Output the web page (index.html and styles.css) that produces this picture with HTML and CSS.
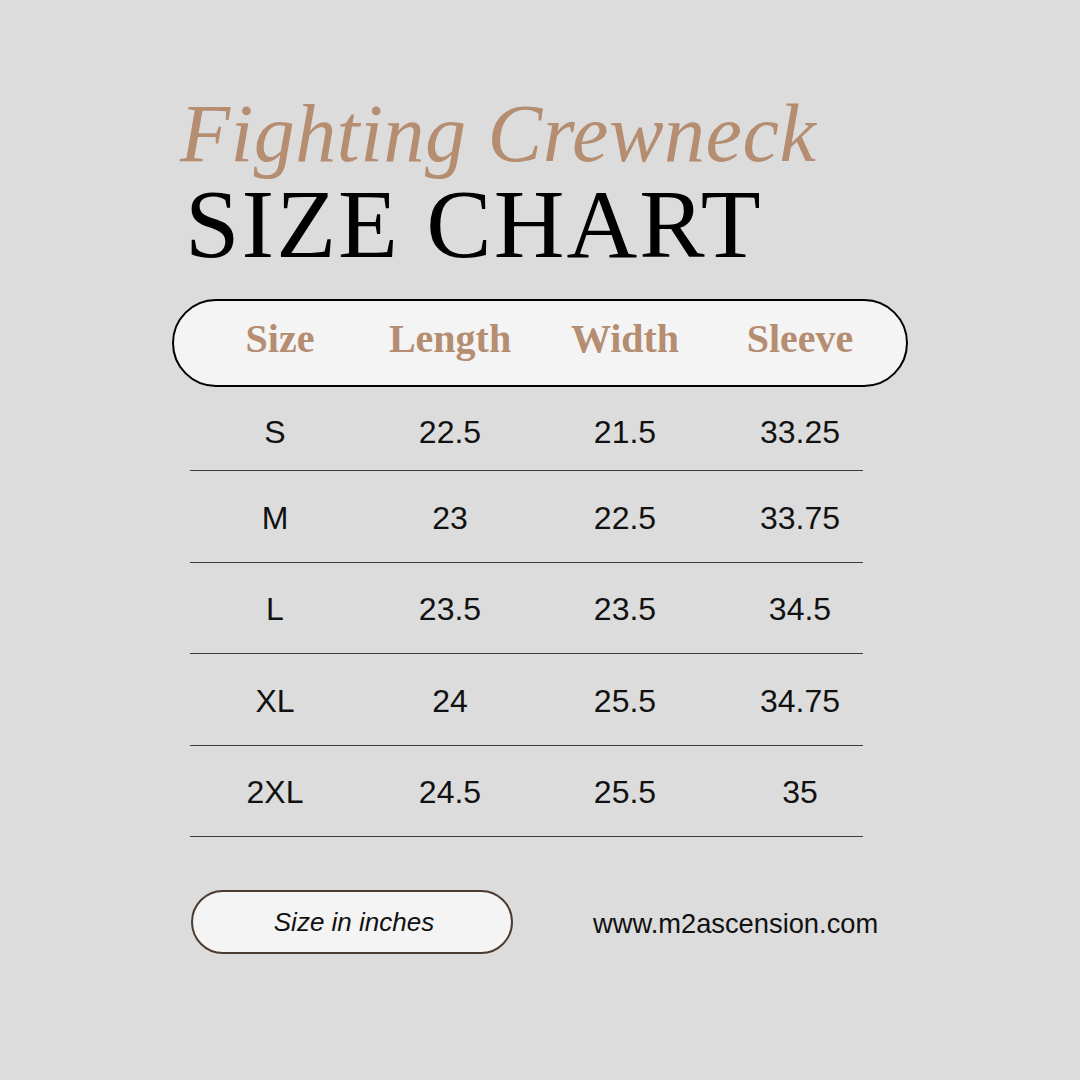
FILE: index.html
```html
<!DOCTYPE html>
<html>
<head>
<meta charset="utf-8">
<link rel="stylesheet" href="styles.css">
</head>
<body>
<main class="page">
  <h1 class="title">Fighting Crewneck</h1>
  <h2 class="subtitle">SIZE CHART</h2>
  <div class="head-pill">
    <div class="head-grid">
      <span>Size</span><span>Length</span><span>Width</span><span>Sleeve</span>
    </div>
  </div>
  <div class="rows">
    <div class="row"><span>S</span><span>22.5</span><span>21.5</span><span>33.25</span></div>
    <div class="row"><span>M</span><span>23</span><span>22.5</span><span>33.75</span></div>
    <div class="row"><span>L</span><span>23.5</span><span>23.5</span><span>34.5</span></div>
    <div class="row"><span>XL</span><span>24</span><span>25.5</span><span>34.75</span></div>
    <div class="row"><span>2XL</span><span>24.5</span><span>25.5</span><span>35</span></div>
  </div>
  <div class="footer">
    <div class="note-pill">Size in inches</div>
    <div class="url">www.m2ascension.com</div>
  </div>
</main>
</body>
</html>
```

FILE: styles.css
```css
html, body {
  margin: 0;
  padding: 0;
}
body {
  width: 1080px;
  height: 1080px;
  background: #dcdcdc;
  overflow: hidden;
}
.page {
  display: flex;
  flex-direction: column;
  padding-top: 93px;
}
.title {
  margin: 0 0 0 180px;
  font-family: "Liberation Serif", serif;
  font-style: italic;
  font-weight: normal;
  font-size: 82px;
  line-height: 82px;
  letter-spacing: 0.5px;
  color: #b58d70;
}
.subtitle {
  margin: 0 0 0 185px;
  font-family: "Liberation Serif", serif;
  font-weight: normal;
  font-size: 98px;
  line-height: 98px;
  letter-spacing: 2px;
  color: #000;
}
.head-pill {
  margin: 26px 0 0 172px;
  width: 736px;
  height: 88px;
  box-sizing: border-box;
  border: 2px solid #000;
  border-radius: 44px;
  background: #f4f4f4;
  display: flex;
  align-items: center;
  padding: 0 0 8px 16px;
}
.head-grid {
  display: grid;
  grid-template-columns: 180px 160px 190px 160px;
  font-family: "Liberation Serif", serif;
  font-weight: bold;
  font-size: 40px;
  line-height: 40px;
  color: #b58d70;
  text-align: center;
}
.rows {
  margin-left: 190px;
  width: 673px;
  display: flex;
  flex-direction: column;
}
.row {
  display: grid;
  grid-template-columns: 170px 180px 170px 180px;
  align-items: center;
  height: 91.5px;
  box-sizing: border-box;
  padding-top: 3px;
  border-bottom: 1px solid #3c3c3c;
  font-family: "Liberation Sans", sans-serif;
  font-size: 32px;
  line-height: 32px;
  color: #111;
  text-align: center;
}
.row:first-child {
  height: 84px;
  padding-top: 7px;
}
.footer {
  display: flex;
  align-items: center;
  margin: 53px 0 0 191px;
}
.note-pill {
  width: 322px;
  height: 64px;
  box-sizing: border-box;
  border: 2px solid #4a3a30;
  border-radius: 32px;
  background: #f4f4f4;
  display: flex;
  align-items: center;
  justify-content: center;
  font-family: "Liberation Sans", sans-serif;
  font-style: italic;
  font-size: 26px;
  color: #111;
  padding: 0 0 0 4px;
}
.url {
  margin-left: 80px;
  padding-top: 4px;
  font-family: "Liberation Sans", sans-serif;
  font-size: 27.3px;
  color: #111;
}
```
